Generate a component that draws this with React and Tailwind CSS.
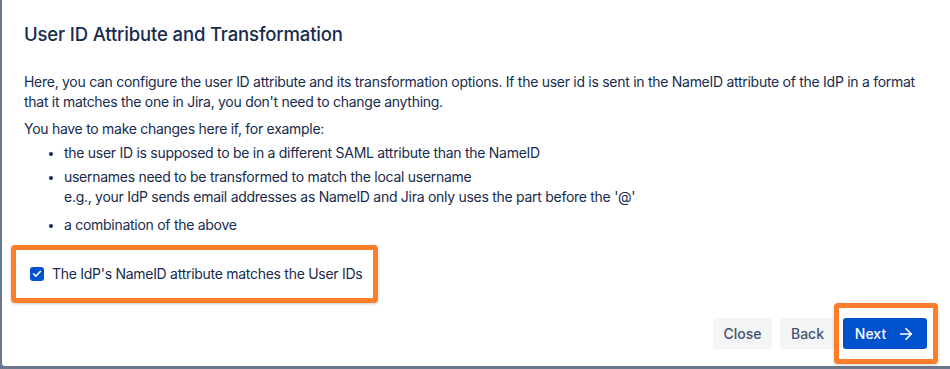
import { ArrowRight, Check } from 'lucide-react';

export default function App() {
  return (
    <div className="w-[950px] h-[369px] bg-[#6b778c] pl-[2px] pb-[3px] overflow-hidden font-['Inter','Liberation_Sans',sans-serif] text-[#172b4d]">
      <div className="h-full bg-white rounded-bl-[3px] flex flex-col">
        {/* Header */}
        <div className="pl-[22px] pr-6 pt-[22px]">
          <h1 className="text-[18.5px] leading-6 font-medium tracking-[-0.15px]">User ID Attribute and Transformation</h1>
        </div>

        {/* Body */}
        <div className="pl-[22px] pr-6 mt-[26px] text-[14px] leading-5 tracking-[-0.28px]">
          <p>
            Here, you can configure the user ID attribute and its transformation options. If the user id is sent in the NameID attribute of the IdP in a format that it matches the one in Jira, you don't need to change anything.
          </p>
          <p className="mt-[7px]">You have to make changes here if, for example:</p>
          <ul className="mt-[4px] pl-[40px] list-disc marker:text-[12px]">
            <li>the user ID is supposed to be in a different SAML attribute than the NameID</li>
            <li className="mt-[4px]">
              usernames need to be transformed to match the local username
              <br />
              e.g., your IdP sends email addresses as NameID and Jira only uses the part before the '@'
            </li>
            <li className="mt-[8px]">a combination of the above</li>
          </ul>
        </div>

        {/* Highlighted checkbox option */}
        <div className="mt-[10px] ml-[9px] w-fit border-[5px] border-[#fd7d2b] rounded-[4px] shadow-[0_1px_3px_rgba(0,0,0,0.2)] pl-[14px] pr-[11px] py-[14px] flex items-center gap-2 text-[14px] leading-5 tracking-[-0.28px]">
          <span className="w-[14px] h-[14px] rounded-[3px] bg-[#0052cc] flex items-center justify-center">
            <Check className="w-[10px] h-[10px] text-white" strokeWidth={4} />
          </span>
          <span>The IdP's NameID attribute matches the User IDs</span>
        </div>

        {/* Footer */}
        <div className="mt-auto pb-[10px] pr-[12px] flex justify-end items-center text-[14px] font-medium">
          <button className="h-[31px] w-[59px] rounded-[3px] bg-[#f4f5f7] text-[#42526e]">Close</button>
          <button className="ml-2 h-[31px] w-[55px] rounded-[3px] bg-[#f4f5f7] text-[#42526e]">Back</button>
          <div className="-ml-px border-[5px] border-[#fd7d2b] rounded-[4px] shadow-[0_1px_3px_rgba(0,0,0,0.2)] pl-[4px] pr-[6px] py-[10px] bg-white">
            <button className="h-[31px] w-[84px] rounded-[3px] bg-[#0052cc] text-white flex items-center justify-center gap-[11px]">
              <span>Next</span>
              <ArrowRight className="w-[18px] h-[18px]" strokeWidth={2.25} />
            </button>
          </div>
        </div>
      </div>
    </div>
  );
}
